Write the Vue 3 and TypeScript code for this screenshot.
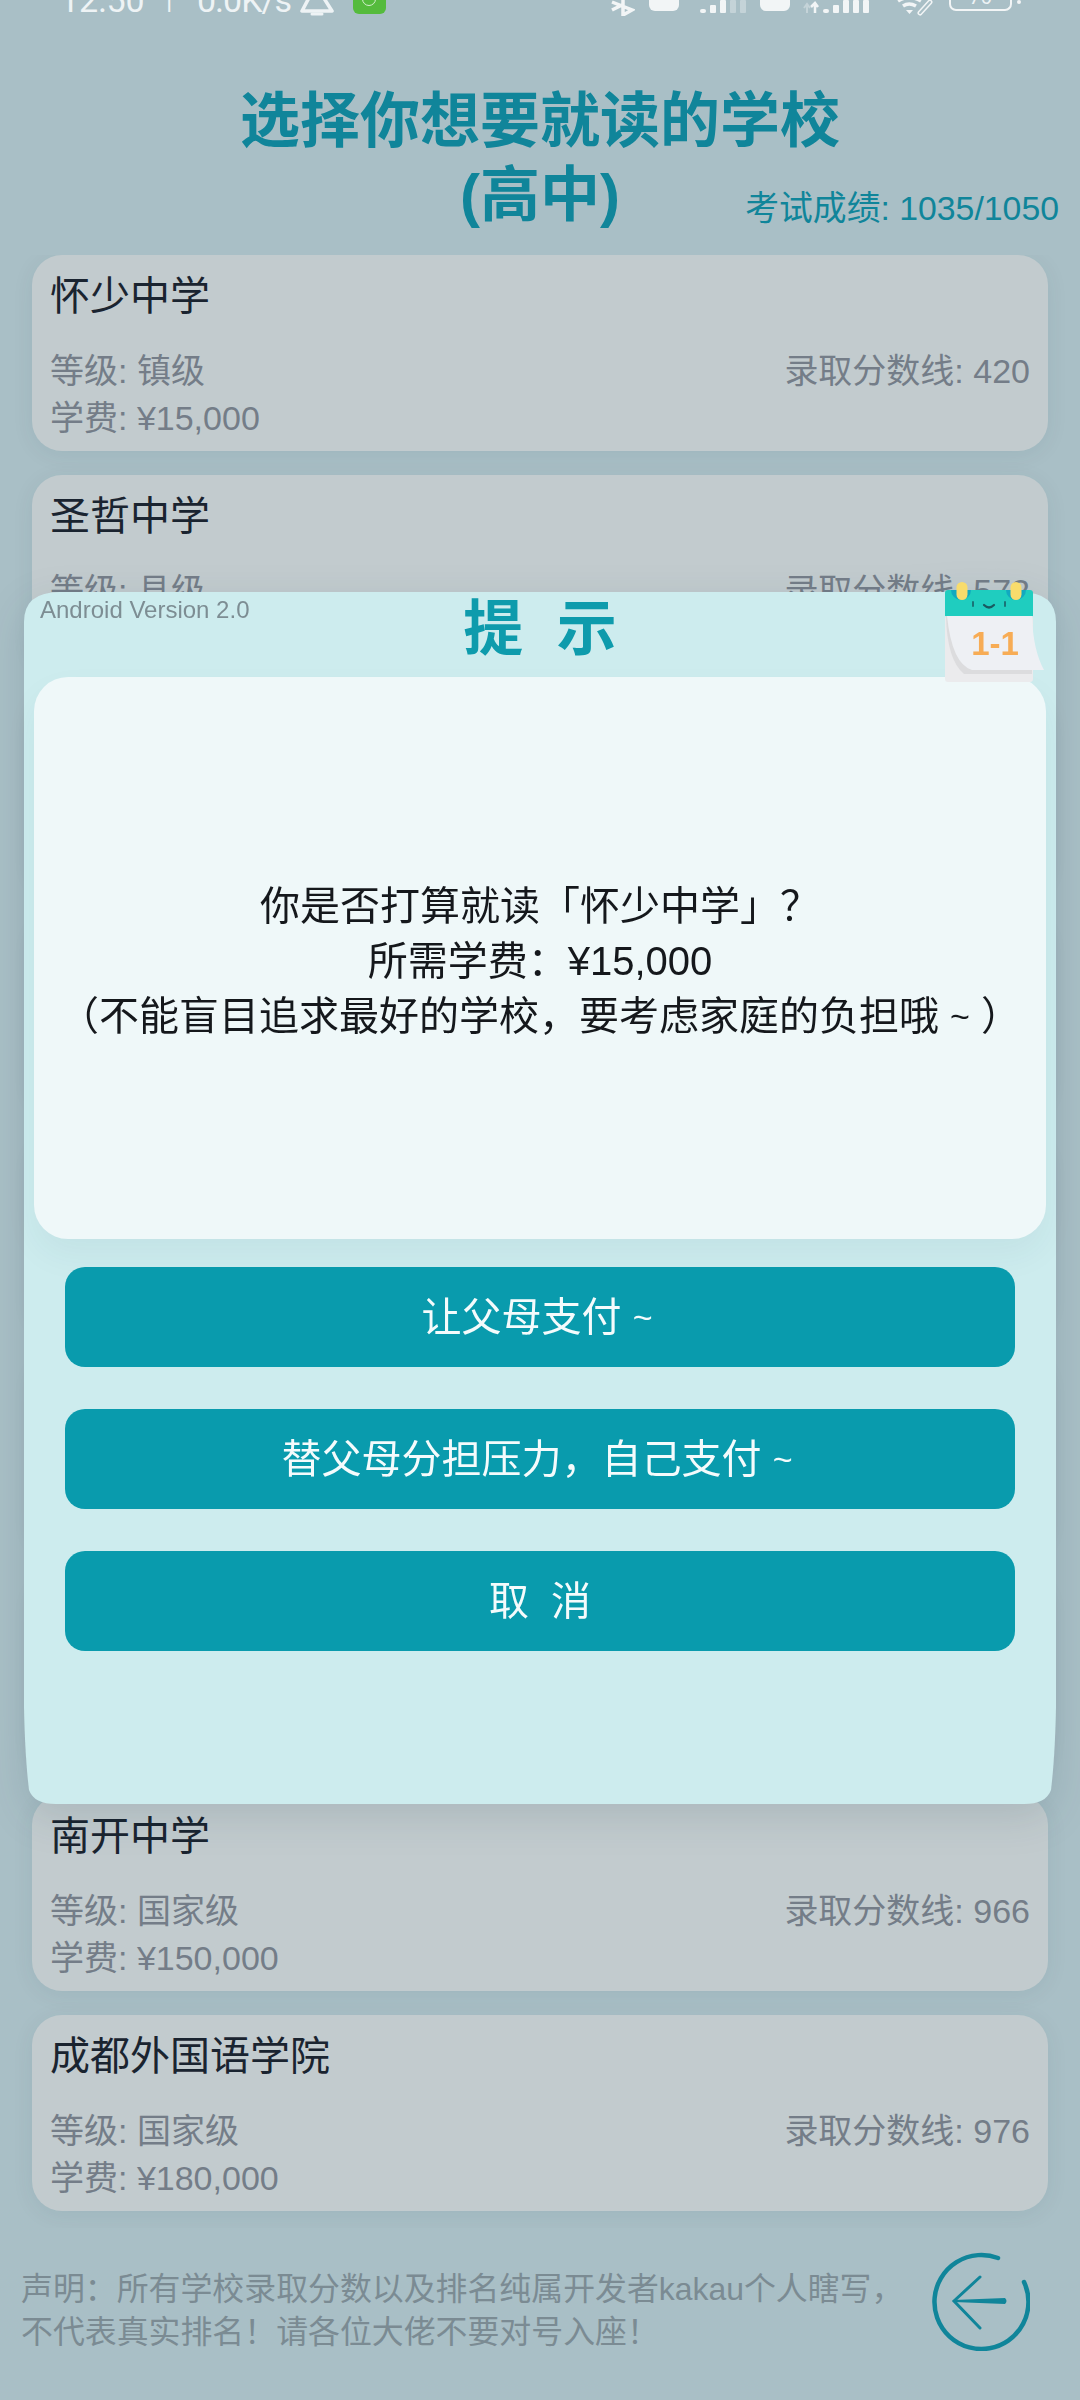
<template>
  <div class="page">
    <div class="status">
      <span class="time">12:50</span>
      <span class="sep">|</span>
      <span class="speed">0.0K/s</span>
      <svg class="bell" width="34" height="16" viewBox="0 0 34 16">
        <path d="M2 11 L11 -6 M20 -8 L32 11 M2 11 H32" fill="none" stroke="#eef3f5" stroke-width="3.5" stroke-linecap="round" />
        <path d="M12 14 H22" stroke="#eef3f5" stroke-width="3" stroke-linecap="round" />
      </svg>
      <div class="badge"><i></i></div>
      <div class="status-right">
        <svg class="bt" width="24" height="16" viewBox="0 0 24 16">
          <path d="M1 2 L21 10 L12 15 V-6 M1 10 L11 5" fill="none" stroke="#f2f5f6" stroke-width="3.5" />
        </svg>
        <div class="hd"></div>
        <svg class="sig" width="46" height="13" viewBox="0 0 46 13">
          <rect x="0" y="9" width="6" height="4" rx="2" fill="#f2f5f6" />
          <rect x="10" y="5" width="6" height="8" rx="1" fill="#f2f5f6" />
          <rect x="20" y="0" width="6" height="13" rx="1" fill="#f2f5f6" />
          <rect x="30" y="0" width="6" height="13" rx="1" fill="#c4d3d8" />
          <rect x="40" y="0" width="6" height="13" rx="1" fill="#c4d3d8" />
        </svg>
        <div class="hd"></div>
        <svg class="sig2" width="66" height="13" viewBox="0 0 66 13">
          <path d="M1 8 L4 4 L7 8 M4 5 V13" fill="none" stroke="#c4d3d8" stroke-width="2" />
          <path d="M8 7 L12 3 L15 7 M12 4 V13" fill="none" stroke="#f2f5f6" stroke-width="2.5" />
          <rect x="20" y="9" width="6" height="4" rx="2" fill="#f2f5f6" />
          <rect x="30" y="5" width="6" height="8" rx="1" fill="#f2f5f6" />
          <rect x="40" y="0" width="6" height="13" rx="1" fill="#f2f5f6" />
          <rect x="50" y="0" width="6" height="13" rx="1" fill="#f2f5f6" />
          <rect x="60" y="0" width="6" height="13" rx="1" fill="#f2f5f6" />
        </svg>
        <svg class="wifi" width="36" height="16" viewBox="0 0 36 16">
          <path d="M1 1 Q12 -6 24 1 M6 6 Q12 2 19 6" fill="none" stroke="#f2f5f6" stroke-width="3.5" />
          <path d="M9 10 H16 L12.5 14 Z" fill="#f2f5f6" />
          <path d="M23 13 L33 2" fill="none" stroke="#f2f5f6" stroke-width="5" stroke-linecap="round" />
          <path d="M23 13 L33 2" fill="none" stroke="#a9bfc6" stroke-width="2" stroke-linecap="round" />
        </svg>
        <div class="battery"><span>76</span></div>
        <i class="tip"></i>
      </div>
    </div>

    <header class="head">
      <h1 class="title">选择你想要就读的学校<br />(高中)</h1>
      <div class="score">考试成绩: 1035/1050</div>
    </header>

    <div class="list">
      <div v-for="(s, i) in schools" :key="i" class="card">
        <template v-if="s.name">
          <div class="name">{{ s.name }}</div>
          <div class="row">
            <span>等级: {{ s.level }}</span>
            <span>录取分数线: {{ s.line }}</span>
          </div>
          <div class="row">
            <span>学费: {{ s.fee }}</span>
          </div>
        </template>
      </div>
    </div>

    <footer class="foot">
      <p class="note">声明：所有学校录取分数以及排名纯属开发者kakau个人瞎写，<br />不代表真实排名！请各位大佬不要对号入座！</p>
      <svg class="back" width="100" height="100" viewBox="0 0 100 100">
        <path d="M68 7 A47 47 0 1 0 94 31" fill="none" stroke="#10859a" stroke-width="4.500" stroke-linecap="round" />
        <path d="M50 26 L24 50 L50 77" fill="none" stroke="#10859a" stroke-width="3" stroke-linecap="round" />
        <path d="M24 49 L75 47 Q78 50 75 53 L24 51 Z" fill="#10859a" />
      </svg>
    </footer>

    <div class="modal">
      <span class="version">Android Version 2.0</span>
      <h2 class="modal-title">提&nbsp;&nbsp;示</h2>
      <svg class="calendar" width="110" height="110" viewBox="60 15 110 110">
        <rect x="65" y="56" width="88" height="66" rx="3" fill="#ebebed" />
        <path d="M66 56 Q67 100 84 114 L152 114 V56 Z" fill="#dcdcde" />
        <path d="M67 56 H152 Q153 90 164 110 L92 110 Q72 104 67 56 Z" fill="#eef0f4" />
        <path d="M65 33 Q65 30 68 30 H150 Q153 30 153 33 V56 H65 Z" fill="#1fcdbf" />
        <path d="M71 30 A10 10 0 0 0 91 30 Z M126 30 A10 10 0 0 0 146 30 Z" fill="#12a9c0" />
        <rect x="76.500" y="22" width="11" height="18" rx="5.500" fill="#f8dc6c" />
        <rect x="130.500" y="22" width="11" height="18" rx="5.500" fill="#f8dc6c" />
        <path d="M93 42 V46 M125 42 V46" stroke="#1a6a70" stroke-width="1.800" stroke-linecap="round" />
        <path d="M104 45 Q109 50 114 45" fill="none" stroke="#1a5a60" stroke-width="2.200" stroke-linecap="round" />
        <text x="115" y="95" class="cal-num" text-anchor="middle">1-1</text>
      </svg>
      <div class="message">
        <p>你是否打算就读「怀少中学」？</p>
        <p>所需学费：¥15,000</p>
        <p>（不能盲目追求最好的学校，要考虑家庭的负担哦 <span class="tilde">~</span> ）</p>
      </div>
      <div class="actions">
        <button class="btn">让父母支付 <span class="tilde end">~</span></button>
        <button class="btn">替父母分担压力，自己支付 <span class="tilde end">~</span></button>
        <button class="btn">取&nbsp;&nbsp;消</button>
      </div>
    </div>
  </div>
</template>

<script setup lang="ts">
interface School {
  name: string
  level: string
  line: number
  fee: string
}

const blank: School = { name: '', level: '', line: 0, fee: '' }

// the middle of the list sits behind the dialog
const schools: School[] = [
  { name: '怀少中学', level: '镇级', line: 420, fee: '¥15,000' },
  { name: '圣哲中学', level: '县级', line: 572, fee: '¥30,000' },
  blank,
  blank,
  blank,
  blank,
  blank,
  { name: '南开中学', level: '国家级', line: 966, fee: '¥150,000' },
  { name: '成都外国语学院', level: '国家级', line: 976, fee: '¥180,000' }
]
</script>

<style>
html,
body {
  margin: 0;
  background: #a9bfc6;
}
</style>

<style scoped>
.page {
  position: relative;
  width: 1080px;
  height: 2400px;
  overflow: hidden;
  background: #a9bfc6;
  font-family: "Liberation Sans", "Noto Sans CJK SC", sans-serif;
}

.status {
  display: flex;
  align-items: flex-start;
  height: 20px;
  padding: 0 59px 0 60px;
  overflow: hidden;
  color: #eef3f5;
  font-family: Roboto, sans-serif;
  font-size: 34px;
  line-height: 14px;
}

.time {
  margin-top: -7px;
  width: 106px;
}

.sep {
  margin-top: -7px;
  width: 31px;
  font-size: 26px;
}

.speed {
  margin-top: -7px;
  width: 103px;
  letter-spacing: -1px;
}

.bell {
  margin-right: 19px;
}

.badge {
  width: 33px;
  height: 14px;
  background: #55bb3d;
  border-radius: 0 0 6px 6px;
  position: relative;
  overflow: hidden;
}

.badge i {
  position: absolute;
  left: 9px;
  top: -8px;
  width: 12px;
  height: 12px;
  border: 1.500px solid #d4efce;
  border-radius: 50%;
}

.status-right {
  display: flex;
  align-items: flex-start;
  margin-left: auto;
}

.hd {
  width: 30px;
  height: 11px;
  margin-left: 14px;
  background: #f2f5f6;
  border-radius: 0 0 6px 6px;
}

.sig {
  margin-left: 21px;
}

.sig2 {
  margin-left: 13px;
}

.wifi {
  margin-left: 28px;
}

.battery {
  width: 63px;
  height: 11px;
  box-sizing: border-box;
  margin-left: 16px;
  border: 2.500px solid #f2f5f6;
  border-top: 0;
  border-radius: 0 0 7px 7px;
  overflow: hidden;
}

.battery span {
  display: block;
  margin-top: -13px;
  font-size: 20px;
  line-height: 20px;
  text-align: center;
}

.tip {
  width: 4px;
  height: 4px;
  margin-left: 5px;
  background: #f2f5f6;
  border-radius: 50%;
}

.head {
  display: grid;
  height: 235px;
  box-sizing: border-box;
  padding: 65px 21px 0;
}

.title {
  grid-area: 1 / 1;
  margin: 0;
  font-size: 60px;
  font-weight: 700;
  line-height: 74px;
  text-align: center;
  color: #10859a;
}

.score {
  grid-area: 1 / 1;
  justify-self: end;
  margin-top: 103px;
  font-size: 33.800px;
  line-height: 40px;
  color: #10859a;
}

.list {
  display: flex;
  flex-direction: column;
  gap: 24px;
  height: 1973px;
  padding: 0 32px;
  overflow: hidden;
}

.card {
  flex: none;
  height: 196px;
  box-sizing: border-box;
  padding: 16px 18px 0 18px;
  background: #c2cbce;
  border-radius: 30px;
  box-shadow: 0 4px 22px rgba(0, 50, 70, 0.07);
}

.name {
  margin-bottom: 27px;
  font-size: 40px;
  line-height: 50px;
  color: #1a2430;
}

.row {
  display: flex;
  justify-content: space-between;
  font-size: 34px;
  line-height: 47px;
  color: #747d88;
}

.foot {
  display: flex;
  justify-content: space-between;
  padding: 23px 0 0 21px;
}

.note {
  margin: 17px 0 0;
  font-size: 31.900px;
  line-height: 43px;
  color: #7b8b93;
}

.back {
  margin-right: 50px;
}

.modal {
  position: absolute;
  left: 24px;
  top: 592px;
  width: 1032px;
  height: 1212px;
  box-sizing: border-box;
  padding: 0 10px;
  filter: drop-shadow(0 12px 20px rgba(0, 40, 60, 0.12));
}

/* sides narrow a little towards the bottom, so the fill is clipped to that outline */
.modal::before {
  content: "";
  position: absolute;
  inset: 0;
  background: #cdecee;
  clip-path: path("M36 0 H996 Q1032 0 1032 30 V1115 Q1031 1165 1027 1198 Q1022 1212 1000 1212 H32 Q10 1212 5 1198 Q1 1165 0 1115 V30 Q0 0 36 0 Z");
}

.version {
  position: absolute;
  left: 16px;
  top: 4px;
  font-size: 24px;
  line-height: 28px;
  color: #7d8d93;
}

.modal-title {
  position: relative;
  margin: 0;
  height: 85px;
  font-size: 60px;
  font-weight: 700;
  line-height: 76px;
  text-align: center;
  color: #0e9bac;
}

.calendar {
  position: absolute;
  z-index: 1;
  left: 916px;
  top: -17px;
}

.cal-num {
  font-size: 33px;
  font-weight: 700;
  fill: #f7ac55;
}

.message {
  position: relative;
  display: flex;
  flex-direction: column;
  justify-content: center;
  box-sizing: border-box;
  height: 562px;
  padding-top: 7px;
  background: #eff8f9;
  border-radius: 34px;
  box-shadow: 0 16px 34px rgba(0, 60, 70, 0.05);
  text-align: center;
  font-size: 40px;
  line-height: 55px;
  color: #15181c;
}

.message p {
  margin: 0;
}

.tilde {
  font-size: 34px;
  vertical-align: 2px;
}

.tilde.end {
  margin-right: 6px;
}

.actions {
  display: flex;
  flex-direction: column;
  gap: 42px;
  padding: 28px 31px 0;
  position: relative;
}

.btn {
  height: 100px;
  padding: 0 0 6px;
  border: 0;
  border-radius: 20px;
  background: #099bad;
  color: #f4fbfc;
  font-family: inherit;
  font-size: 40px;
}
</style>
